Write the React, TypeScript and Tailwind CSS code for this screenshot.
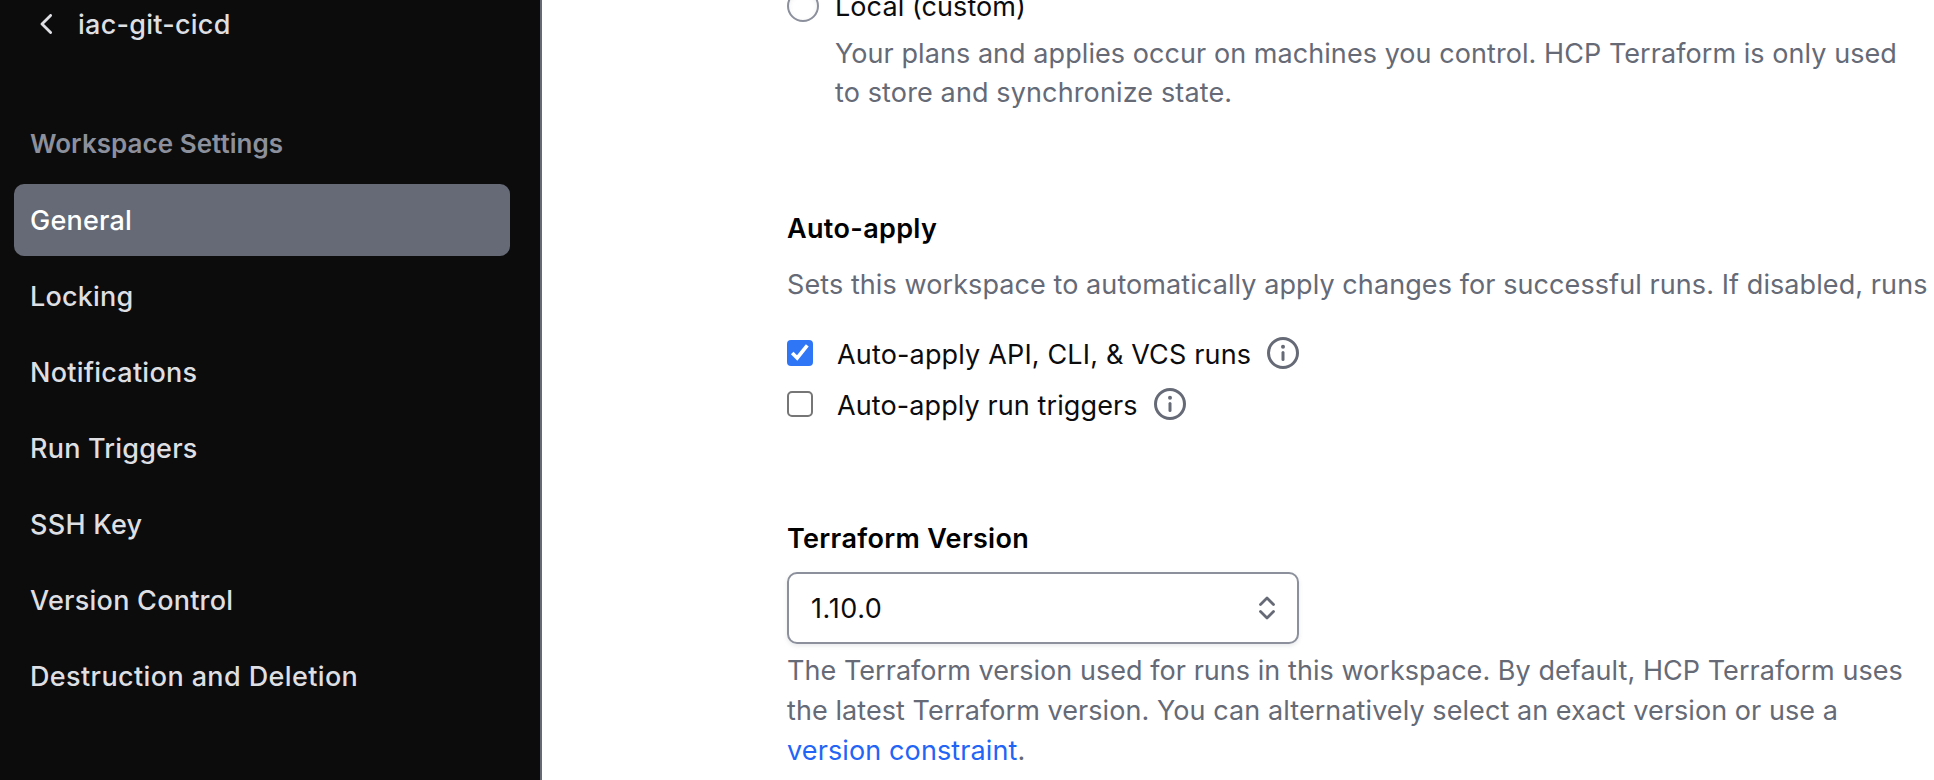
const navItems = [
  { label: "General", tracking: "tracking-[0.2px]", active: true },
  { label: "Locking", tracking: "tracking-[0.2px]" },
  { label: "Notifications", tracking: "tracking-[0.24px]" },
  { label: "Run Triggers", tracking: "tracking-[0.2px]" },
  { label: "SSH Key", tracking: "tracking-[0.25px]" },
  { label: "Version Control", tracking: "tracking-[0.25px]" },
  { label: "Destruction and Deletion", tracking: "tracking-[0.38px]" },
];

function InfoIcon() {
  return (
    <svg viewBox="0 0 16 16" className="mt-0.5 ml-4 size-8 shrink-0 text-[#656a76]" fill="currentColor">
      <circle cx="8" cy="8" r="7.25" fill="none" stroke="currentColor" strokeWidth="1.5" />
      <circle cx="8" cy="4.9" r="1" />
      <path d="M7.25 7.75a.75.75 0 011.5 0v3.5a.75.75 0 01-1.5 0v-3.5z" />
    </svg>
  );
}

export default function App() {
  return (
    <div className="flex h-[780px] w-full overflow-hidden bg-white font-['Inter',sans-serif] text-[27px] leading-10">
      <aside className="flex w-[542px] shrink-0 flex-col border-r-2 border-[#656a76] bg-[#0c0c0c] pr-[30px] pl-[14px] text-[#dedfe3]">
        <div className="mt-1 flex h-10 items-center pl-[26px]">
          <svg viewBox="0 0 12 20" className="h-5 w-3" fill="none" stroke="currentColor" strokeWidth="2.8" strokeLinecap="round" strokeLinejoin="round">
            <path d="M10.600 1.400L2 10l8.600 8.600" />
          </svg>
          <span className="ml-[26px] pt-0.5 font-medium tracking-[0.25px]">iac-git-cicd</span>
        </div>
        <div className="mt-20 pl-4 text-[26px] font-semibold tracking-[0.04px] text-[#8c909c]">Workspace Settings</div>
        <nav className="mt-5 flex flex-col gap-1">
          {navItems.map((item) => (
            <a
              key={item.label}
              className={
                item.active
                  ? "flex h-[72px] items-center rounded-[10px] bg-[#656a76] pt-0.5 pl-4 font-medium text-white"
                  : "flex h-[72px] items-center rounded-[10px] pt-0.5 pl-4 font-medium"
              }
            >
              <span className={item.tracking}>{item.label}</span>
            </a>
          ))}
        </nav>
      </aside>
      <main className="-mt-[13px] flex min-w-0 flex-1 flex-col pl-[245px] whitespace-nowrap text-[#656a76]">
        <div className="flex h-10 text-[#0c0c0e]">
          <span className="mt-[3px] size-8 rounded-full border-2 border-[#8c909c] bg-white shadow-[inset_0_2px_4px_rgba(101,106,118,0.12)]" />
          <span className="ml-4 tracking-[0.08px]">Local (custom)</span>
        </div>
        <div className="mt-[7px] pl-12 leading-[39px]">
          <span className="tracking-[0.062px]">Your plans and applies occur on machines you control. HCP Terraform is only used</span>
          <br />
          <span className="tracking-[0.13px]">to store and synchronize state.</span>
        </div>
        <h2 className="mt-[97px] font-semibold tracking-[0.34px] text-black">Auto-apply</h2>
        <p className="mt-4 tracking-[0.084px]">
          Sets this workspace to automatically apply changes for successful runs. If disabled, runs
        </p>
        <div className="mt-[30px] flex h-10 text-[#0c0c0e]">
          <span className="mt-[5px] size-[26px] rounded-[4px] bg-[#2f76f7]">
            <svg viewBox="0 0 26 26" className="size-[26px]" fill="none" stroke="white" strokeWidth="3.6">
              <path d="M5.200 13l5 5L20.300 5.400" />
            </svg>
          </span>
          <span className="ml-6 tracking-[0.16px]">Auto-apply API, CLI, &amp; VCS runs</span>
          <InfoIcon />
        </div>
        <div className="mt-[11px] flex h-10 text-[#0c0c0e]">
          <span className="mt-[5px] size-[26px] rounded-[5px] border-2 border-[#767676] bg-white" />
          <span className="ml-6 tracking-[0.1px]">Auto-apply run triggers</span>
          <InfoIcon />
        </div>
        <h2 className="mt-[93px] font-semibold tracking-[0.32px] text-black">Terraform Version</h2>
        <div className="mt-[13px] flex h-[72px] w-[512px] items-center justify-between rounded-[10px] border-2 border-[#8c909c] bg-white px-[22px] text-[#0c0c0e] shadow-[0_2px_4px_rgba(101,106,118,0.15)]">
          <span className="pt-0.5 tracking-[0.6px]">1.10.0</span>
          <svg viewBox="0 0 16 24" className="h-6 w-4 text-[#656a76]" fill="none" stroke="currentColor" strokeWidth="2.8" strokeLinecap="round" strokeLinejoin="round">
            <path d="M1.500 8.500L8 2l6.500 6.500M1.500 15.500L8 22l6.500-6.500" />
          </svg>
        </div>
        <p className="mt-[7px]">
          <span className="tracking-[0.045px]">The Terraform version used for runs in this workspace. By default, HCP Terraform uses</span>
          <br />
          <span className="tracking-[0.072px]">the latest Terraform version. You can alternatively select an exact version or use a</span>
          <br />
          <a className="tracking-[0.12px] text-[#2264f6]">version constraint</a>.
        </p>
      </main>
    </div>
  );
}
